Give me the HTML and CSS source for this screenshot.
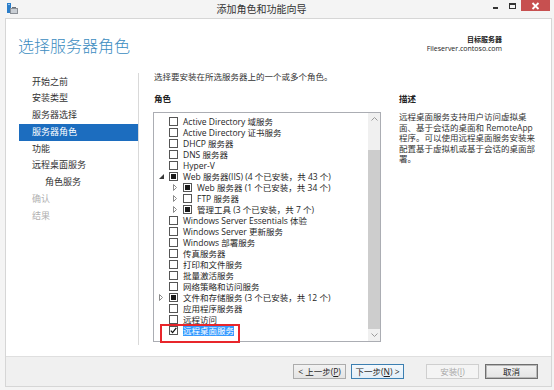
FILE: index.html
```html
<!DOCTYPE html>
<html lang="zh-CN">
<head>
  <meta charset="UTF-8">
  <title>添加角色和功能向导</title>
  <link rel="stylesheet" href="styles.css">
</head>
<body>
  <div class="window">
    <div class="titlebar">
      <svg class="app-icon" width="11" height="11" viewBox="0 0 11 11">
        <rect x="0" y="0" width="4" height="10" fill="#2a7dc9"/>
        <rect x="1" y="1" width="2" height="1" fill="#9cc8ef"/>
        <rect x="3" y="5" width="8" height="6" fill="#8a8f96"/>
        <rect x="4" y="6" width="6" height="4" fill="#c9ced4"/>
        <rect x="5" y="4" width="4" height="1" fill="#6b7077"/>
      </svg>
      <div class="title">添加角色和功能向导</div>
      <div class="controls">
        <span class="ctl ctl-min"><i></i></span>
        <span class="ctl ctl-max"><i></i></span>
        <span class="ctl ctl-close">
          <svg width="9" height="8" viewBox="0 0 9 8"><path d="M1.5 1 L7.5 7 M7.5 1 L1.5 7" stroke="#fff" stroke-width="1.8"/></svg>
        </span>
      </div>
    </div>

    <div class="client">
      <div class="header">
        <h1>选择服务器角色</h1>
        <div class="target">
          <b>目标服务器</b>
          <span>Fileserver.contoso.com</span>
        </div>
      </div>

      <div class="content">
        <ul class="steps">
          <li>开始之前</li>
          <li>安装类型</li>
          <li>服务器选择</li>
          <li class="active">服务器角色</li>
          <li>功能</li>
          <li>远程桌面服务</li>
          <li class="sub">角色服务</li>
          <li class="disabled">确认</li>
          <li class="disabled">结果</li>
        </ul>

        <div class="page">
          <div class="roles-col">
            <p class="intro">选择要安装在所选服务器上的一个或多个角色。</p>
            <h2>角色</h2>
            <div class="listbox">
              <ul class="roles">
                <li><span class="toggle"></span><span class="box"></span>Active Directory 域服务</li>
                <li><span class="toggle"></span><span class="box"></span>Active Directory 证书服务</li>
                <li><span class="toggle"></span><span class="box"></span>DHCP 服务器</li>
                <li><span class="toggle"></span><span class="box"></span>DNS 服务器</li>
                <li><span class="toggle"></span><span class="box"></span>Hyper-V</li>
                <li><span class="toggle"><svg width="5" height="5" viewBox="0 0 5 5"><path d="M5 0 L5 5 L0 5 Z" fill="#3a3a3a"/></svg></span><span class="box part"></span>Web 服务器(IIS) (4 个已安装，共 43 个)</li>
                <li class="lvl2"><span class="toggle"><svg width="4" height="7" viewBox="0 0 4 7"><path d="M0.5 0.5 L3.5 3.5 L0.5 6.5 Z" fill="none" stroke="#8a8a8a"/></svg></span><span class="box part"></span>Web 服务器 (1 个已安装，共 34 个)</li>
                <li class="lvl2"><span class="toggle"><svg width="4" height="7" viewBox="0 0 4 7"><path d="M0.5 0.5 L3.5 3.5 L0.5 6.5 Z" fill="none" stroke="#8a8a8a"/></svg></span><span class="box"></span>FTP 服务器</li>
                <li class="lvl2"><span class="toggle"><svg width="4" height="7" viewBox="0 0 4 7"><path d="M0.5 0.5 L3.5 3.5 L0.5 6.5 Z" fill="none" stroke="#8a8a8a"/></svg></span><span class="box part"></span>管理工具 (3 个已安装，共 7 个)</li>
                <li><span class="toggle"></span><span class="box"></span>Windows Server Essentials 体验</li>
                <li><span class="toggle"></span><span class="box"></span>Windows Server 更新服务</li>
                <li><span class="toggle"></span><span class="box"></span>Windows 部署服务</li>
                <li><span class="toggle"></span><span class="box"></span>传真服务器</li>
                <li><span class="toggle"></span><span class="box"></span>打印和文件服务</li>
                <li><span class="toggle"></span><span class="box"></span>批量激活服务</li>
                <li><span class="toggle"></span><span class="box"></span>网络策略和访问服务</li>
                <li><span class="toggle"><svg width="4" height="7" viewBox="0 0 4 7"><path d="M0.5 0.5 L3.5 3.5 L0.5 6.5 Z" fill="none" stroke="#8a8a8a"/></svg></span><span class="box part"></span>文件和存储服务 (3 个已安装，共 12 个)</li>
                <li><span class="toggle"></span><span class="box"></span>应用程序服务器</li>
                <li><span class="toggle"></span><span class="box"></span>远程访问</li>
                <li class="picked">
                  <span class="toggle"></span>
                  <span class="box checked"><svg width="7" height="7" viewBox="0 0 7 7"><path d="M0.8 3.6 L2.6 5.6 L6.3 0.8" fill="none" stroke="#111" stroke-width="1.3"/></svg></span>
                  <span class="selected">远程桌面服务</span>
                  <span class="mark"></span>
                </li>
              </ul>
              <div class="scrollbar">
                <div class="arrow"><svg width="7" height="4" viewBox="0 0 7 4"><path d="M0.5 3.5 L3.5 0.5 L6.5 3.5" fill="none" stroke="#9a9a9a"/></svg></div>
                <div class="track"><div class="thumb"></div></div>
                <div class="arrow"><svg width="7" height="4" viewBox="0 0 7 4"><path d="M0.5 0.5 L3.5 3.5 L6.5 0.5" fill="none" stroke="#9a9a9a"/></svg></div>
              </div>
            </div>
          </div>

          <div class="desc-col">
            <h2>描述</h2>
            <p>远程桌面服务支持用户访问虚拟桌<br>面、基于会话的桌面和 RemoteApp<br>程序。可以使用远程桌面服务安装来<br>配置基于虚拟机或基于会话的桌面部<br>署。</p>
          </div>
        </div>
      </div>

      <div class="footer">
        <button class="btn">&lt; 上一步(<u>P</u>)</button>
        <button class="btn btn-next">下一步(<u>N</u>) &gt;</button>
        <button class="btn btn-off">安装(<u>I</u>)</button>
        <button class="btn btn-cancel">取消</button>
      </div>
    </div>
  </div>
</body>
</html>
```

FILE: styles.css
```css
* {
  box-sizing: border-box;
}

body {
  margin: 0;
  background: #f4f4f4;
  font-family: "Open Sans", "Noto Sans CJK SC", sans-serif;
  font-size: 8.5px;
  color: #1e1e1e;
}

ul {
  list-style: none;
  margin: 0;
  padding: 0;
}

.window {
  width: 554px;
  height: 390px;
  background: #f4f4f4;
  display: flex;
  flex-direction: column;
}

/* title bar */
.titlebar {
  height: 18px;
  display: flex;
  align-items: flex-start;
}

.app-icon {
  margin: 3px 0 0 7px;
}

.title {
  flex: 1;
  text-align: center;
  padding-left: 18px;
  line-height: 18px;
  font-size: 10px;
  color: #333;
}

.controls {
  display: flex;
  margin-right: 4px;
}

.ctl {
  height: 11px;
  display: flex;
  align-items: center;
  justify-content: center;
}

.ctl-min {
  width: 16px;
}

.ctl-min i {
  width: 5px;
  height: 2px;
  background: #333;
  margin-top: 5px;
}

.ctl-max {
  width: 18px;
}

.ctl-max i {
  width: 7px;
  height: 6px;
  border: 1px solid #333;
  border-top-width: 2px;
}

.ctl-close {
  width: 29px;
  background: #c75050;
}

/* client area */
.client {
  height: 369px;
  margin: 0 2px 0 5px;
  background: #fff;
  border: 1px solid #d6d6d6;
  display: flex;
  flex-direction: column;
}

.header {
  height: 52px;
  display: flex;
  justify-content: space-between;
  align-items: flex-start;
}

.header h1 {
  margin: 16.5px 0 0 12px;
  font-size: 16px;
  line-height: 20px;
  font-weight: 300;
  color: #3b8cbf;
}

.target {
  margin: 16px 49px 0 0;
  display: flex;
  flex-direction: column;
  align-items: flex-end;
  font-size: 7px;
  line-height: 9px;
  color: #222;
}

.content {
  flex: 1;
  display: flex;
}

/* left steps */
.steps {
  width: 133px;
  margin: 2px 0 11px 0;
  padding: 0.5px 0 0 13px;
  border-right: 1px solid #d9d9d9;
  font-size: 9px;
}

.steps li {
  height: 16.75px;
  line-height: 16.75px;
  padding-left: 13px;
  color: #333;
}

.steps li.sub {
  padding-left: 26px;
}

.steps li.active {
  background: #1c6dbf;
  color: #fff;
}

.steps li.disabled {
  color: #b0b0b0;
}

/* main page */
.page {
  flex: 1;
  display: flex;
  padding-left: 14px;
}

.roles-col {
  width: 228px;
}

.intro {
  margin: 0;
  padding-left: 1px;
  line-height: 12px;
  color: #333;
}

h2 {
  margin: 10px 0 0 1px;
  font-size: 8.5px;
  line-height: 12px;
  font-weight: bold;
  color: #222;
}

.listbox {
  margin-top: 7px;
  height: 230px;
  border: 1px solid #abadb3;
  display: flex;
}

.roles {
  flex: 1;
  padding: 3px 0 0 1px;
}

.roles li {
  position: relative;
  height: 11px;
  line-height: 11px;
  display: flex;
  align-items: center;
  white-space: nowrap;
}

.roles li.lvl2 {
  padding-left: 14px;
}

.toggle {
  width: 14px;
  height: 11px;
  display: flex;
  align-items: center;
  padding-left: 4px;
}

.box {
  width: 9px;
  height: 9px;
  margin-right: 5px;
  border: 1px solid #555;
  background: #fff;
  display: flex;
  align-items: center;
  justify-content: center;
  flex-shrink: 0;
}

.box.part::after {
  content: "";
  width: 5px;
  height: 5px;
  background: #1a1a1a;
}

.selected {
  background: #3399ff;
  color: #fff;
  line-height: 11px;
}

.mark {
  position: absolute;
  left: 5px;
  top: -1px;
  width: 80px;
  height: 19px;
  border: 2px solid #e8262b;
}

.scrollbar {
  width: 12px;
  background: #f0f0f0;
  display: flex;
  flex-direction: column;
}

.arrow {
  height: 12px;
  display: flex;
  align-items: center;
  justify-content: center;
}

.track {
  flex: 1;
  display: flex;
  flex-direction: column;
}

.thumb {
  flex: 1;
  margin-top: 25px;
  background: #cdcdcd;
}

.desc-col {
  flex: 1;
  padding: 12px 0 0 17px;
}

.desc-col p {
  margin: 7px 0 0 1px;
  line-height: 10.6px;
  color: #333;
}

/* footer buttons */
.footer {
  height: 30px;
  background: #f0f0f0;
  border-top: 1px solid #dfdfdf;
  display: flex;
  justify-content: flex-end;
  padding: 7px 13px 0 0;
}

.btn {
  width: 53px;
  height: 15px;
  padding: 0;
  font-family: inherit;
  font-size: 8.5px;
  line-height: 13px;
  color: #1e1e1e;
  background: linear-gradient(#f2f2f2, #e4e4e4);
  border: 1px solid #acacac;
}

.btn-next {
  margin-left: 5px;
  border-color: #3c7fb1;
  background: linear-gradient(#f3f8fc, #e3eef8);
}

.btn-off {
  margin-left: 22px;
  background: #f4f4f4;
  border-color: #cfcfcf;
  color: #a8a8a8;
}

.btn-cancel {
  margin-left: 6px;
  border-color: #6f6f6f;
  box-shadow: inset 0 0 0 1px #b9b9b9;
}
```
